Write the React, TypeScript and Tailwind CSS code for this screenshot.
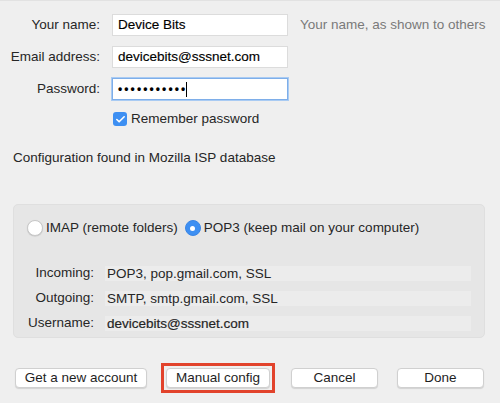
import { Check } from "lucide-react";

const font = "font-['Liberation_Sans',Arial,sans-serif]";

function Field({ label, children }: { label: string; children: React.ReactNode }) {
    return (
        <div className="flex items-center h-[22px]">
            <div className="w-[100px] text-right text-[#262626]">{label}</div>
            {children}
        </div>
    );
}

function Radio({ checked, label }: { checked?: boolean; label: string }) {
    return (
        <div className="flex items-center">
            {checked ? (
                <span className="w-[16px] h-[16px] rounded-full bg-[#3d8ff2] border border-[#3a86e6] flex items-center justify-center">
                    <span className="w-[5px] h-[5px] rounded-full bg-white" />
                </span>
            ) : (
                <span className="w-[16px] h-[16px] rounded-full bg-white border border-[#c8c8c8] shadow-[0_0.5px_1px_rgba(0,0,0,0.15)]" />
            )}
            <span className="ml-[3px]">{label}</span>
        </div>
    );
}

function InfoRow({ label, value, strong }: { label: string; value: string; strong?: boolean }) {
    return (
        <div className="flex items-center h-[15px]">
            <div className="w-[80px] text-right text-[#262626]">{label}</div>
            <div
                className={
                    "ml-[11px] w-[366px] h-[15px] bg-[#ececec] pl-[2px] flex items-center leading-none " +
                    (strong ? "[-webkit-text-stroke:0.2px_#222]" : "")
                }
            >
                {value}
            </div>
        </div>
    );
}

function Btn({ label, w }: { label: string; w: string }) {
    return (
        <button
            className={
                "h-[20px] bg-white rounded-[4px] border border-[#d0d0d0] shadow-[0_1px_1px_rgba(0,0,0,0.12)] text-[13.5px] leading-none text-[#1e1e1e] " +
                w
            }
        >
            {label}
        </button>
    );
}

export default function App() {
    const inputCls =
        "ml-[12px] w-[176px] h-[22px] bg-white border border-[#dcdcdc] pl-[5px] flex items-center text-black [-webkit-text-stroke:0.15px_#000]";
    return (
        <div className={"w-[500px] h-[403px] bg-[#efefef] border-t border-[#e2e2e2] text-[13.5px] text-[#262626] flex flex-col " + font}>
            <div className="pt-[13px] flex flex-col gap-[10px]">
                <Field label="Your name:">
                    <div className={inputCls}>Device Bits</div>
                    <span className="ml-[12px] text-[#7a7a7a]">Your name, as shown to others</span>
                </Field>
                <Field label="Email address:">
                    <div className={inputCls}>devicebits@sssnet.com</div>
                </Field>
                <Field label="Password:">
                    <div className="ml-[12px] w-[176px] h-[22px] bg-white border border-[#7eaee9] shadow-[0_0_0_1px_#a9cbf3] pl-[5px] flex items-center text-black">
                        <span className="text-[12px] tracking-[2.1px] font-bold">•••••••••••</span>
                        <span className="w-px h-[15px] bg-black -ml-[1px]" />
                    </div>
                </Field>
            </div>

            <div className="mt-[12px] ml-[113px] flex items-center h-[14px]">
                <span className="w-[14px] h-[14px] rounded-[3px] bg-[#3d8ff2] flex items-center justify-center">
                    <Check className="w-[11px] h-[11px] text-white" strokeWidth={3.5} />
                </span>
                <span className="ml-[4px]">Remember password</span>
            </div>

            <div className="mt-[24px] ml-[13px] h-[16px] leading-[16px]">Configuration found in Mozilla ISP database</div>

            <div className="mt-[38px] ml-[13px] w-[472px] h-[134px] bg-[#e6e6e6] border border-[#dfdfdf] rounded-[5px] flex flex-col pl-[13px] pt-[15px]">
                <div className="flex items-center gap-[7px] h-[16px]">
                    <Radio label="IMAP (remote folders)" />
                    <Radio checked label="POP3 (keep mail on your computer)" />
                </div>
                <div className="mt-[30px] -ml-[13px] flex flex-col gap-[10px]">
                    <InfoRow label="Incoming:" value="POP3, pop.gmail.com, SSL" />
                    <InfoRow label="Outgoing:" value="SMTP, smtp.gmail.com, SSL" />
                    <InfoRow label="Username:" value="devicebits@sssnet.com" strong />
                </div>
            </div>

            <div className="mt-[25px] pl-[15px] flex items-center">
                <Btn label="Get a new account" w="w-[132px]" />
                <div className="ml-[14px] border-[3px] border-[#e2432c] p-[2px] flex">
                    <Btn label="Manual config" w="w-[104px]" />
                </div>
                <div className="ml-[16px]">
                    <Btn label="Cancel" w="w-[87px]" />
                </div>
                <div className="ml-[19px]">
                    <Btn label="Done" w="w-[87px]" />
                </div>
            </div>
        </div>
    );
}
